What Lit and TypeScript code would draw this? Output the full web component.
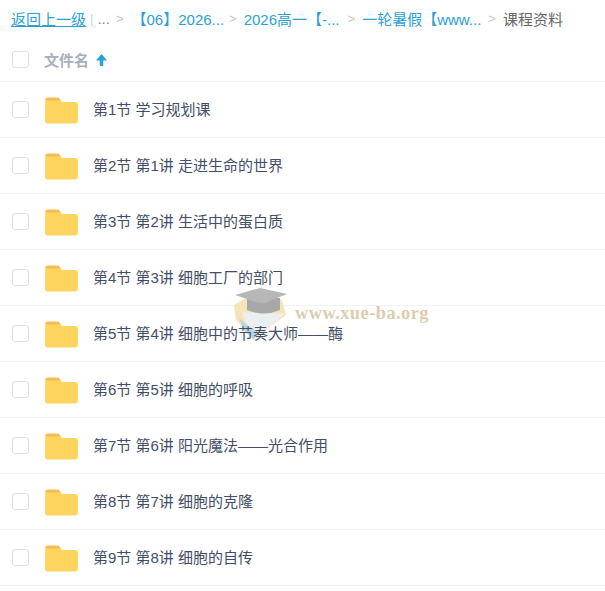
import { LitElement, html, css, svg } from "lit";
import { customElement } from "lit/decorators.js";

const rows = [
  "第1节 学习规划课",
  "第2节 第1讲 走进生命的世界",
  "第3节 第2讲 生活中的蛋白质",
  "第4节 第3讲 细胞工厂的部门",
  "第5节 第4讲 细胞中的节奏大师——酶",
  "第6节 第5讲 细胞的呼吸",
  "第7节 第6讲 阳光魔法——光合作用",
  "第8节 第7讲 细胞的克隆",
  "第9节 第8讲 细胞的自传",
];

const folder = svg`<svg class="folder" width="33" height="27" viewBox="0 0 34 27" preserveAspectRatio="none">
  <path d="M0 3a2.5 2.5 0 0 1 2.5-2.5h10a3 3 0 0 1 2.4 1.2L17 4.5H3z" fill="#f0bd52"/>
  <path d="M0 5.5a2 2 0 0 1 2-2h14.5l1 1.5h14a2.5 2.5 0 0 1 2.5 2.5V24a2.5 2.5 0 0 1-2.5 2.5h-29A2.5 2.5 0 0 1 0 24z" fill="#ffd45f"/>
</svg>`;

@customElement("app-root")
export class AppRoot extends LitElement {
  static styles = css`
    :host {
      display: block;
      width: 605px;
      height: 591px;
      overflow: hidden;
      position: relative;
      background: #fff;
      font-family: "Liberation Sans", "Noto Sans CJK SC", sans-serif;
      font-size: 15px;
      color: #424e67;
    }
    .crumbs {
      display: flex;
      align-items: center;
      height: 40px;
      padding: 0 0 3px 11px;
      box-sizing: border-box;
      white-space: nowrap;
      color: #666;
    }
    a { color: #2b9fd8; text-decoration: none; }
    a.back { text-decoration: underline; }
    .bar { color: #c9d6e2; margin: 0 4px 0 4px; font-size: 13px; }
    .dots { color: #888; }
    .sep { color: #c8c8c8; margin: 0 7px; font-size: 13px; }
    .sep.first { margin-left: 6px; margin-right: 8px; }
    .sep.second { margin-left: 5px; margin-right: 7px; }
    .sep.third { margin-left: 8px; margin-right: 7px; }
    .cur { color: #666; }
    .head {
      display: flex;
      align-items: center;
      height: 42px;
      padding: 0 0 2px 12px;
      box-sizing: border-box;
      border-bottom: 1px solid #f3f3f3;
    }
    .box {
      width: 15px;
      height: 15px;
      border: 1px solid #dcdfe5;
      border-radius: 3px;
      background: #fff;
      flex: none;
    }
    .name {
      margin-left: 15px;
      color: #a8aebb;
      font-weight: 700;
      display: flex;
      align-items: center;
      gap: 7px;
    }
    .row {
      display: flex;
      align-items: center;
      height: 56px;
      padding: 0 0 1px 12px;
      box-sizing: border-box;
      border-bottom: 1px solid #f3f3f3;
    }
    .folder { margin: 2px 0 0 16px; flex: none; }
    .label { margin-left: 15px; position: relative; top: -1px; z-index: 1; }
    .mark {
      position: absolute;
      left: 234px;
      top: 288px;
      display: flex;
      align-items: center;
      pointer-events: none;
    }
    .mark-text {
      margin: -10px 0 0 7px;
      font-family: "Liberation Serif", serif;
      font-weight: 700;
      font-size: 18.4px;
      letter-spacing: 0.45px;
      color: #dccdb0;
    }
  `;

  render() {
    return html`
      <div class="crumbs">
        <a class="back">返回上一级</a><span class="bar">|</span><span class="dots">...</span>
        <span class="sep first">&gt;</span><a>【06】2026...</a>
        <span class="sep second">&gt;</span><a>2026高一【-...</a>
        <span class="sep third">&gt;</span><a>一轮暑假【www...</a>
        <span class="sep">&gt;</span><span class="cur">课程资料</span>
      </div>
      <div class="head">
        <span class="box"></span>
        <span class="name">文件名
          <svg width="11" height="12" viewBox="0 0 11 12"><path d="M5.5 0 11 6.5H7.2V12H3.8V6.5H0z" fill="#2b9fe0"/></svg>
        </span>
      </div>
      ${rows.map(
        (r) => html`<div class="row"><span class="box"></span>${folder}<span class="label">${r}</span></div>`
      )}
      <div class="mark">
        <svg width="54" height="60" viewBox="0 0 54 60">
          <path d="M0 17 L12 10 L48 12 L52 27 L34 40 L24 50 L10 42 L2 32z" fill="#f7e3b8"/>
          <path d="M8 24 L50 26 L36 38 L26 44 L12 36z" fill="#eaeff1"/>
          <path d="M5 30 L14 38 L24 44 L20 52 L10 42z" fill="#b3d5e8"/>
          <path d="M13 10 L46 10 L46 22 Q30 29 13 22z" fill="#a8a8a8"/>
          <path d="M1 7 L26 0 L53 6 L31 15 L22 14z" fill="#b7b7b7"/>
        </svg>
        <span class="mark-text">www.xue-ba.org</span>
      </div>
    `;
  }
}
